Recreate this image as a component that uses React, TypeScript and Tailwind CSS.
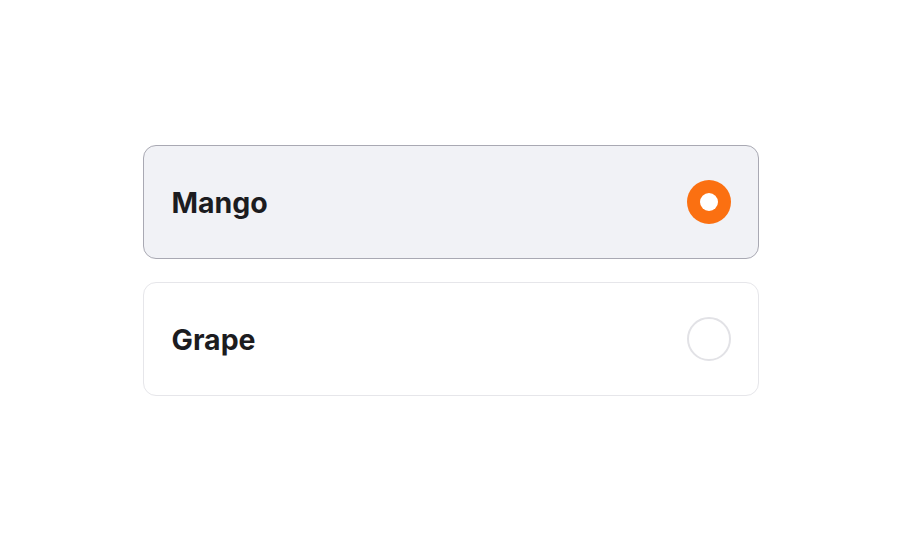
import React from "react";

export default function App() {
  const items = [
    { label: "Mango", selected: true },
    { label: "Grape", selected: false },
  ];
  return (
    <div
      className="w-[900px] h-[540px] bg-white flex items-center justify-center"
      style={{ fontFamily: "Inter, 'Noto Sans', sans-serif" }}
    >
      <div className="w-[617px] flex flex-col gap-[23px] pl-px">
        {items.map((it) => (
          <div
            key={it.label}
            className={
              it.selected
                ? "h-[114px] rounded-[13px] border-[1.5px] border-[#a9a9b3] bg-[#f1f2f6] flex items-center justify-between pl-[28px] pr-[27px]"
                : "h-[114px] rounded-[13px] border-[1.5px] border-[#e6e6ea] bg-white flex items-center justify-between pl-[28px] pr-[27px]"
            }
          >
            <span className="text-[28.5px] font-bold text-[#1c1c1f] pt-[3px]">
              {it.label}
            </span>
            {it.selected ? (
              <div className="w-[44px] h-[44px] rounded-full bg-[#fb7011] flex items-center justify-center">
                <div className="w-[18px] h-[18px] rounded-full bg-white" />
              </div>
            ) : (
              <div className="w-[44px] h-[44px] rounded-full border-2 border-[#e2e2e6] bg-white" />
            )}
          </div>
        ))}
      </div>
    </div>
  );
}
